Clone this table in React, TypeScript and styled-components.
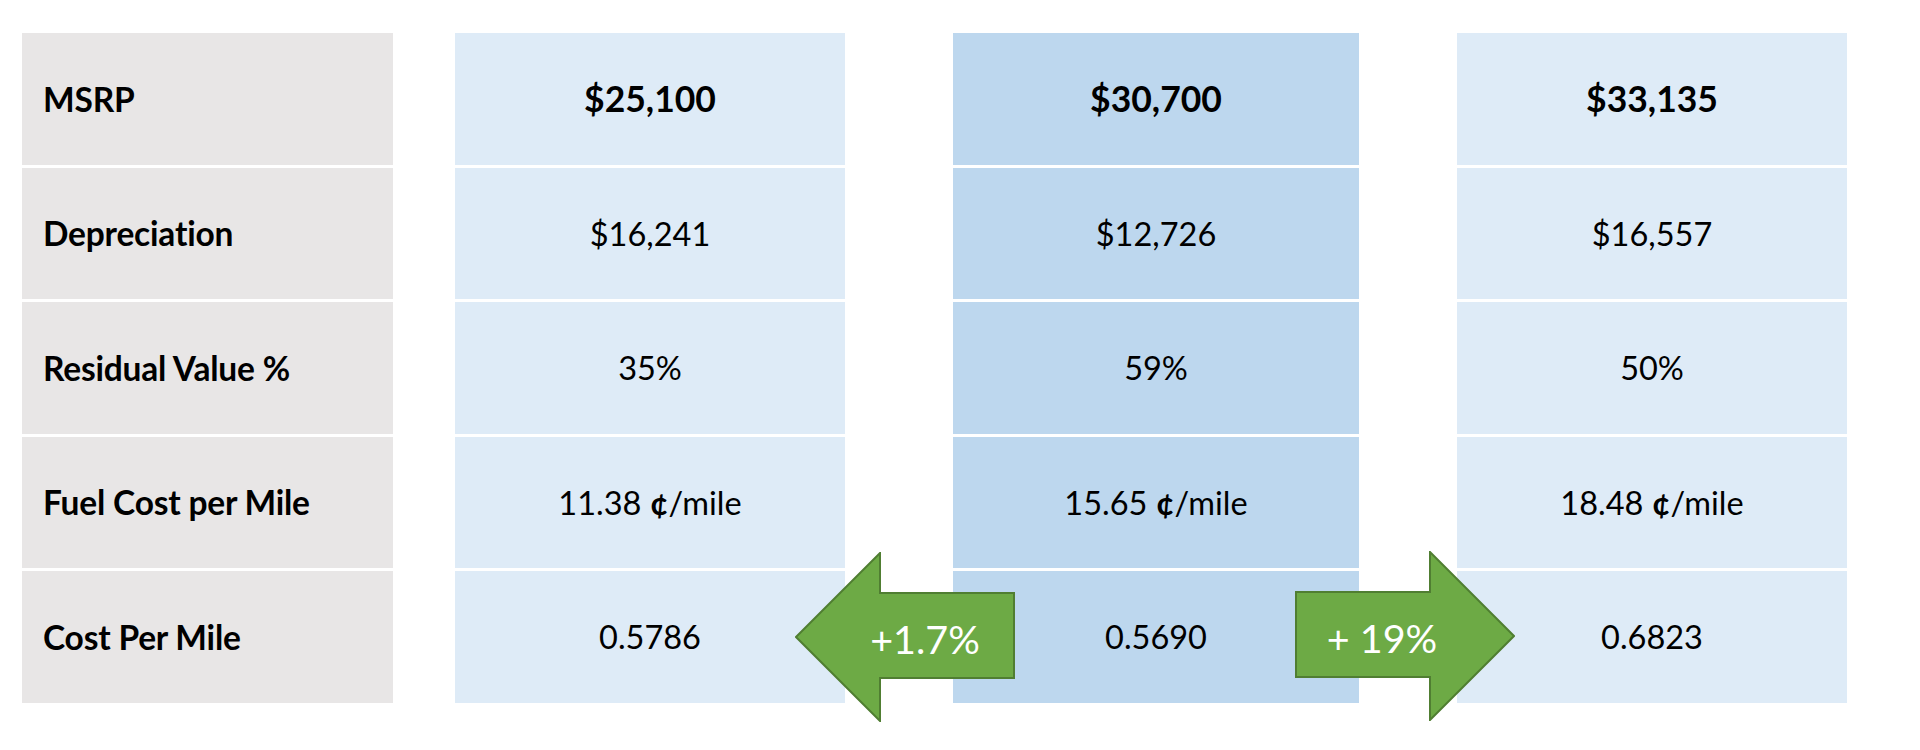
import React from "react";
import styled, { createGlobalStyle } from "styled-components";

const GlobalStyle = createGlobalStyle`
  html, body {
    margin: 0;
    padding: 0;
    background: #ffffff;
  }
  body {
    font-family: Lato, "Open Sans", "Liberation Sans", sans-serif;
    color: #000;
  }
`;

const Page = styled.div`
  position: relative;
  width: 1920px;
  height: 750px;
  box-sizing: border-box;
  padding: 33px 0 0 22px;
  display: flex;
  align-items: flex-start;
  overflow: hidden;
`;

const Column = styled.div<{ $width: number; $offset: number }>`
  width: ${(p) => p.$width}px;
  margin-left: ${(p) => p.$offset}px;
  display: flex;
  flex-direction: column;
  gap: 3px;
  flex-shrink: 0;
`;

const Cell = styled.div<{ $bg: string; $align: "left" | "center" }>`
  height: 131.5px;
  background: ${(p) => p.$bg};
  display: flex;
  align-items: center;
  justify-content: ${(p) => (p.$align === "left" ? "flex-start" : "center")};
  padding-left: ${(p) => (p.$align === "left" ? "21px" : "0")};
  box-sizing: border-box;
`;

const Label = styled.span`
  font-size: 33.5px;
  font-weight: 700;
  letter-spacing: -0.2px;
`;

const Value = styled.span<{ $strong?: boolean }>`
  font-size: ${(p) => (p.$strong ? "35.5px" : "32.5px")};
  font-weight: ${(p) => (p.$strong ? 700 : 400)};
`;

const Cent = styled.b`
  font-weight: 700;
`;

const ArrowBox = styled.div<{ $x: number; $y: number }>`
  position: absolute;
  left: ${(p) => p.$x}px;
  top: ${(p) => p.$y}px;
  width: 220px;
  height: 170px;
`;

const ArrowSvg = styled.svg`
  position: absolute;
  inset: 0;
  width: 220px;
  height: 170px;
`;

const ArrowText = styled.span<{ $cx: number }>`
  position: absolute;
  left: ${(p) => p.$cx}px;
  top: 86px;
  transform: translate(-50%, -50%);
  color: #ffffff;
  font-size: 39.5px;
  font-weight: 400;
  white-space: nowrap;
`;

const GRAY = "#E8E6E6";
const LIGHT = "#DEEBF7";
const MID = "#BDD7EE";

const labels = ["MSRP", "Depreciation", "Residual Value %", "Fuel Cost per Mile", "Cost Per Mile"];

type Col = {
  width: number;
  offset: number;
  bg: string;
  msrp: string;
  dep: string;
  res: string;
  fuel: string;
  cpm: string;
};

const cols: Col[] = [
  { width: 390, offset: 62, bg: LIGHT, msrp: "$25,100", dep: "$16,241", res: "35%", fuel: "11.38", cpm: "0.5786" },
  { width: 406, offset: 108, bg: MID, msrp: "$30,700", dep: "$12,726", res: "59%", fuel: "15.65", cpm: "0.5690" },
  { width: 390, offset: 98, bg: LIGHT, msrp: "$33,135", dep: "$16,557", res: "50%", fuel: "18.48", cpm: "0.6823" },
];

const Arrow: React.FC<{ x: number; y: number; dir: "left" | "right"; text: string; cx: number }> = ({
  x,
  y,
  dir,
  text,
  cx,
}) => {
  const left = "1,85 85,1 85,41 219,41 219,126 85,126 85,169";
  const right = "219,85 135,1 135,41 1,41 1,126 135,126 135,169";
  return (
    <ArrowBox $x={x} $y={y}>
      <ArrowSvg viewBox="0 0 220 170">
        <polygon
          points={dir === "left" ? left : right}
          fill="#6DAA45"
          stroke="#507E32"
          strokeWidth={2}
          strokeLinejoin="miter"
        />
      </ArrowSvg>
      <ArrowText $cx={cx}>{text}</ArrowText>
    </ArrowBox>
  );
};

export default function App() {
  return (
    <>
      <GlobalStyle />
      <Page>
        <Column $width={371} $offset={0}>
          {labels.map((l) => (
            <Cell key={l} $bg={GRAY} $align="left">
              <Label>{l}</Label>
            </Cell>
          ))}
        </Column>
        {cols.map((c) => (
          <Column key={c.msrp} $width={c.width} $offset={c.offset}>
            <Cell $bg={c.bg} $align="center">
              <Value $strong>{c.msrp}</Value>
            </Cell>
            <Cell $bg={c.bg} $align="center">
              <Value>{c.dep}</Value>
            </Cell>
            <Cell $bg={c.bg} $align="center">
              <Value>{c.res}</Value>
            </Cell>
            <Cell $bg={c.bg} $align="center">
              <Value>
                {c.fuel} <Cent>¢</Cent>/mile
              </Value>
            </Cell>
            <Cell $bg={c.bg} $align="center">
              <Value>{c.cpm}</Value>
            </Cell>
          </Column>
        ))}
        <Arrow x={795} y={552} dir="left" text="+1.7%" cx={130} />
        <Arrow x={1295} y={551} dir="right" text="+ 19%" cx={87} />
      </Page>
    </>
  );
}
